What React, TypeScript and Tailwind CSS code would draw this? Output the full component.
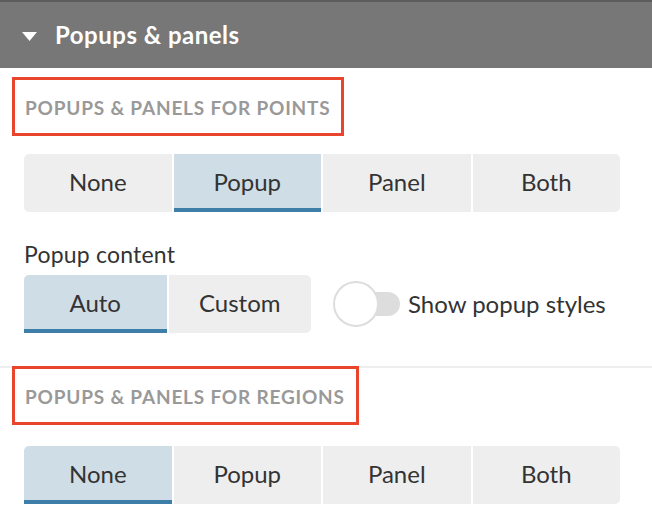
import { useState } from "react"

const font = { fontFamily: "Lato, 'Open Sans', sans-serif" }

function Segmented({
  options,
  value,
  onChange,
  className,
}: {
  options: string[]
  value: string
  onChange: (v: string) => void
  className?: string
}) {
  return (
    <div className={`flex gap-[2px] ${className ?? ""}`}>
      {options.map((opt, i) => {
        const active = opt === value
        return (
          <button
            key={opt}
            onClick={() => onChange(opt)}
            className={`flex-1 h-[58px] flex items-center justify-center text-[24px] text-[#333] border-b-4 ${
              active ? "bg-[#cfdde6] border-[#3e7faa]" : "bg-[#eeeeee] border-transparent"
            } ${i === 0 ? "rounded-l-[5px]" : ""} ${i === options.length - 1 ? "rounded-r-[5px]" : ""} ${
              active && i === 0 ? "rounded-bl-none" : ""
            } ${active && i === options.length - 1 ? "rounded-br-none" : ""}`}
          >
            <span className="mt-[2px]">{opt}</span>
          </button>
        )
      })}
    </div>
  )
}

function SectionTitle({ children }: { children: string }) {
  return (
    <div className="inline-flex items-center h-[59px] border-[3px] border-[#e9452d] pl-[10px] pr-[11px]">
      <span className="text-[19px] font-bold tracking-[0.8px] text-[#999999] uppercase mt-[3px]">{children}</span>
    </div>
  )
}

export default function App() {
  const [points, setPoints] = useState("Popup")
  const [content, setContent] = useState("Auto")
  const [regions, setRegions] = useState("None")
  const [styles, setStyles] = useState(false)

  return (
    <div className="w-[652px] h-[528px] bg-white overflow-hidden" style={font}>
      {/* Header */}
      <div className="h-[68px] bg-[#777777] border-t-2 border-[#5c5c5c] flex items-center pl-[22px]">
        <svg width="15" height="9" viewBox="0 0 15 9" className="mt-[2px]">
          <path d="M0 0 L15 0 L7.5 9 Z" fill="#ffffff" />
        </svg>
        <span className="ml-[18px] text-white font-bold text-[24px] tracking-[0.5px]">Popups &amp; panels</span>
      </div>

      {/* Points */}
      <div className="pl-[12px] pt-[9px]">
        <SectionTitle>Popups &amp; panels for points</SectionTitle>
      </div>
      <div className="px-[24px] pt-[18px]">
        <Segmented options={["None", "Popup", "Panel", "Both"]} value={points} onChange={setPoints} className="w-[596px]" />

        <div className="mt-[27px] text-[23px] tracking-[0.2px] text-[#333] leading-[30px]">Popup content</div>
        <div className="flex items-center mt-[6px]">
          <Segmented options={["Auto", "Custom"]} value={content} onChange={setContent} className="w-[287px]" />
          <button onClick={() => setStyles(!styles)} className="relative ml-[22px] w-[67px] h-[46px] flex items-center">
            <span className="absolute left-[30px] w-[37px] h-[24px] rounded-full bg-[#dddddd]" />
            <span className="absolute left-0 w-[46px] h-[46px] rounded-full bg-white border-2 border-[#dddddd]" />
          </button>
          <span className="ml-[8px] text-[24px] text-[#333]">Show popup styles</span>
        </div>
      </div>

      {/* Regions */}
      <div className="mt-[33px] border-t-2 border-[#eeeeee] pl-[12px]">
        <div className="-mt-[2px]">
          <SectionTitle>Popups &amp; panels for regions</SectionTitle>
        </div>
      </div>
      <div className="px-[24px] pt-[21px]">
        <Segmented options={["None", "Popup", "Panel", "Both"]} value={regions} onChange={setRegions} className="w-[596px]" />
      </div>
    </div>
  )
}
